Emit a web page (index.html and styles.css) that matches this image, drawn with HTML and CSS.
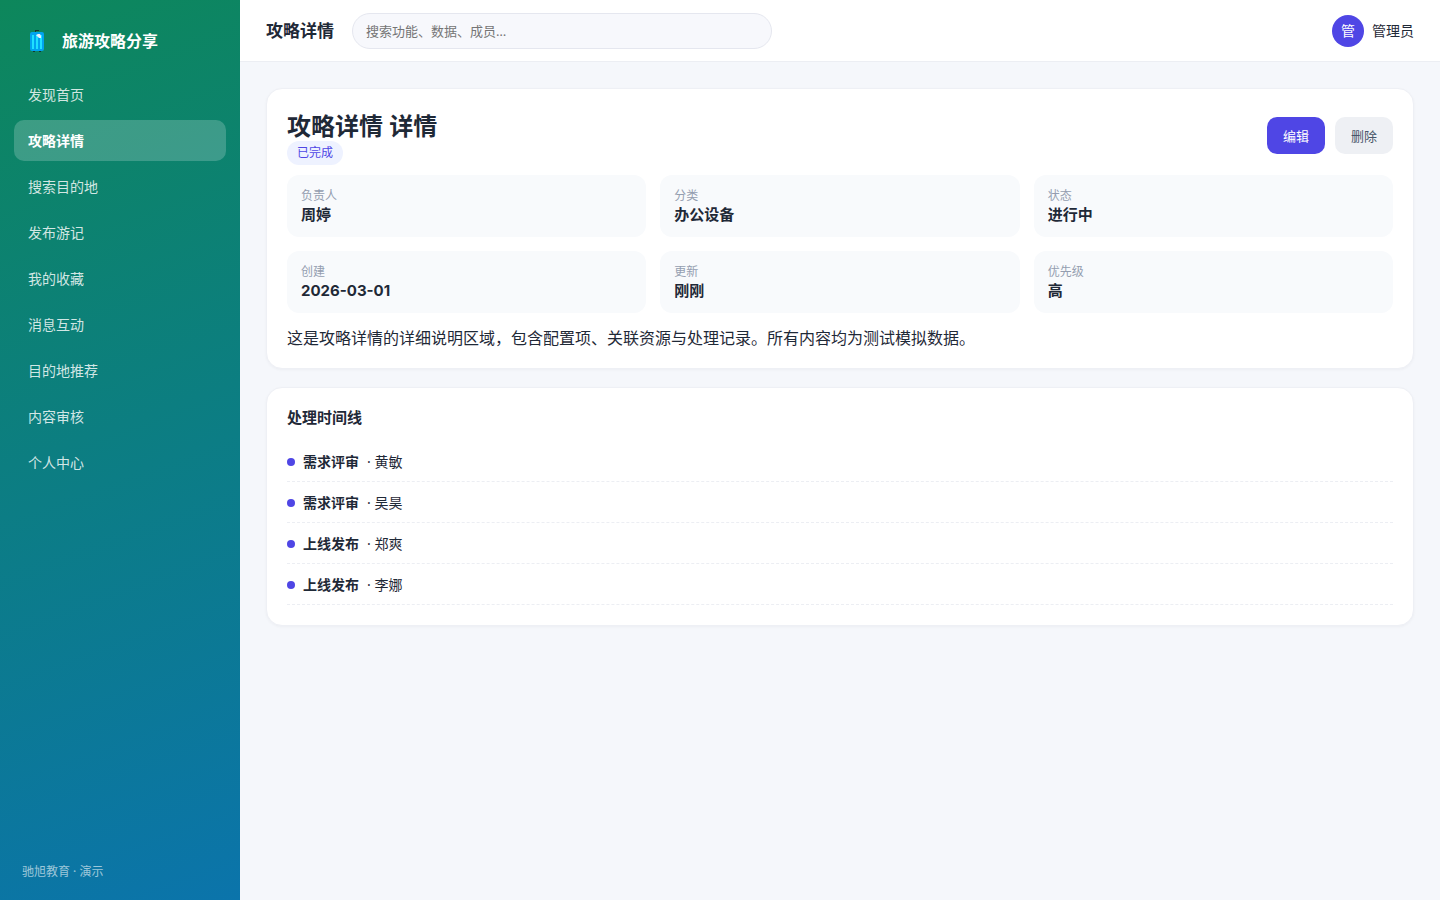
FILE: index.html
```html
<!DOCTYPE html>
<html lang="zh-CN">
<head>
	<meta charset="UTF-8">
	<meta name="viewport" content="width=device-width, initial-scale=1.0">
	<title>攻略详情 - 旅游攻略分享</title>
	<link rel="stylesheet" href="styles.css">
</head>
<body>
	<div class="layout">
		<aside class="sidebar">
			<div class="brand">
				<svg class="logo" viewBox="0 0 14 22" width="14" height="22" aria-hidden="true">
					<path d="M5 2V0h4v1H6v1z" fill="#17352f"/>
					<path d="M3 21h2v1H3zM9 21h2v1H9z" fill="#17352f"/>
					<rect x="0" y="2" width="14" height="19" rx="2" fill="#00a3ee"/>
					<path d="M2 5h2v14H2zM6 5h2v14H6zM10 5h2v14h-2z" fill="#1fe0ff"/>
					<path d="M6 5l2-1h2l1 2v2H9z" fill="#e6f1fb"/>
				</svg>
				<span>旅游攻略分享</span>
			</div>
			<nav class="nav">
				<a href="#home">发现首页</a>
				<a href="#detail" class="active">攻略详情</a>
				<a href="#search">搜索目的地</a>
				<a href="#publish">发布游记</a>
				<a href="#favorites">我的收藏</a>
				<a href="#messages">消息互动</a>
				<a href="#recommend">目的地推荐</a>
				<a href="#audit">内容审核</a>
				<a href="#profile">个人中心</a>
			</nav>
			<div class="sidebar-foot">驰旭教育 · 演示</div>
		</aside>

		<div class="main">
			<header class="topbar">
				<h1>攻略详情</h1>
				<input class="search" type="search" placeholder="搜索功能、数据、成员…" aria-label="搜索">
				<div class="user">
					<span class="avatar">管</span>
					<span>管理员</span>
				</div>
			</header>

			<main class="content">
				<section class="card">
					<div class="detail-head">
						<div>
							<h2>攻略详情 详情</h2>
							<span class="badge">已完成</span>
						</div>
						<div class="actions">
							<button type="button" class="btn primary">编辑</button>
							<button type="button" class="btn">删除</button>
						</div>
					</div>
					<dl class="info-grid">
						<div class="info"><dt>负责人</dt><dd>周婷</dd></div>
						<div class="info"><dt>分类</dt><dd>办公设备</dd></div>
						<div class="info"><dt>状态</dt><dd>进行中</dd></div>
						<div class="info"><dt>创建</dt><dd>2026-03-01</dd></div>
						<div class="info"><dt>更新</dt><dd>刚刚</dd></div>
						<div class="info"><dt>优先级</dt><dd>高</dd></div>
					</dl>
					<p class="desc">这是攻略详情的详细说明区域，包含配置项、关联资源与处理记录。所有内容均为测试模拟数据。</p>
				</section>

				<section class="card">
					<h3>处理时间线</h3>
					<ul class="timeline">
						<li><i class="dot"></i><b>需求评审</b><span>· 黄敏</span></li>
						<li><i class="dot"></i><b>需求评审</b><span>· 吴昊</span></li>
						<li><i class="dot"></i><b>上线发布</b><span>· 郑爽</span></li>
						<li><i class="dot"></i><b>上线发布</b><span>· 李娜</span></li>
					</ul>
				</section>
			</main>
		</div>
	</div>
</body>
</html>
```
FILE: styles.css
```css
* {
	box-sizing: border-box;
	margin: 0;
	padding: 0;
}
body {
	font-family: "Noto Sans", "Noto Sans CJK SC", sans-serif;
	font-size: 14px;
	line-height: 20px;
	color: #1f2937;
	background: #f5f7fb;
}
.layout {
	display: flex;
	min-height: 100vh;
}

/* sidebar */
.sidebar {
	display: flex;
	flex-direction: column;
	flex: none;
	width: 240px;
	padding: 20px 14px 18px;
	color: #fff;
	background: linear-gradient(160deg, #0d875b, #0b74ab);
}
.brand {
	display: flex;
	align-items: center;
	gap: 18px;
	height: 42px;
	padding-left: 16px;
	margin-bottom: 12px;
	font-size: 16px;
	font-weight: 700;
}
.nav {
	display: flex;
	flex-direction: column;
	gap: 5px;
}
.nav a {
	padding: 11px 14px 10px;
	border-radius: 10px;
	color: rgba(255, 255, 255, 0.82);
	text-decoration: none;
}
.nav a.active {
	color: #fff;
	font-weight: 700;
	background: rgba(255, 255, 255, 0.2);
}
.sidebar-foot {
	margin-top: auto;
	padding: 0 8px;
	font-size: 12px;
	color: rgba(255, 255, 255, 0.6);
}

/* top bar */
.main {
	flex: 1;
	min-width: 0;
}
.topbar {
	display: flex;
	align-items: center;
	gap: 18px;
	height: 62px;
	padding: 0 26px;
	background: #fff;
	border-bottom: 1px solid #eceef3;
}
.topbar h1 {
	font-size: 17px;
}
.search {
	width: 420px;
	height: 36px;
	padding: 0 13px;
	font: inherit;
	font-size: 13px;
	border: 1px solid #e5e7ef;
	border-radius: 18px;
	background: #f7f8fc;
	appearance: none;
}
.search::placeholder {
	color: #757575;
}
.user {
	display: flex;
	align-items: center;
	gap: 8px;
	margin-left: auto;
}
.avatar {
	display: grid;
	place-items: center;
	width: 32px;
	height: 32px;
	border-radius: 50%;
	color: #fff;
	background: #4f46e5;
}

/* cards */
.content {
	display: flex;
	flex-direction: column;
	gap: 18px;
	padding: 26px;
}
.card {
	padding: 20px;
	background: #fff;
	border: 1px solid #eef0f5;
	border-radius: 16px;
	box-shadow: 0 1px 3px rgba(15, 23, 42, 0.04);
}
.card h3 {
	margin-bottom: 15px;
	font-size: 15px;
	line-height: 18px;
}
.detail-head {
	display: flex;
	align-items: flex-start;
	justify-content: space-between;
	margin-bottom: 10px;
}
.detail-head h2 {
	padding-top: 2px;
	font-size: 24px;
	line-height: 30px;
}
.badge {
	display: block;
	width: fit-content;
	padding: 2px 10px;
	border-radius: 12px;
	font-size: 12px;
	color: #4f46e5;
	background: #eef2ff;
}
.actions {
	display: flex;
	gap: 10px;
	padding-top: 8px;
}
.btn {
	height: 37px;
	padding: 0 16px;
	border: none;
	border-radius: 10px;
	font: inherit;
	font-size: 13px;
	color: #475569;
	background: #eef0f4;
	cursor: pointer;
}
.btn.primary {
	color: #fff;
	background: #4f46e5;
}
.info-grid {
	display: grid;
	grid-template-columns: repeat(3, 1fr);
	gap: 14px;
	margin-bottom: 15px;
}
.info {
	padding: 11px 14px 13px;
	border-radius: 12px;
	background: #f8fafc;
}
.info dt {
	font-size: 12px;
	color: #949eb0;
}
.info dd {
	font-family: Inter, "Noto Sans CJK SC", sans-serif;
	font-size: 15px;
	font-weight: 700;
	line-height: 18px;
}
.desc {
	font-size: 16px;
	line-height: 20px;
}

/* timeline */
.timeline {
	list-style: none;
}
.timeline li {
	display: flex;
	align-items: center;
	gap: 8px;
	padding: 11px 0 9px;
	border-bottom: 1px dashed #eceef3;
}
.dot {
	width: 8px;
	height: 8px;
	border-radius: 50%;
	background: #4f46e5;
}
```
